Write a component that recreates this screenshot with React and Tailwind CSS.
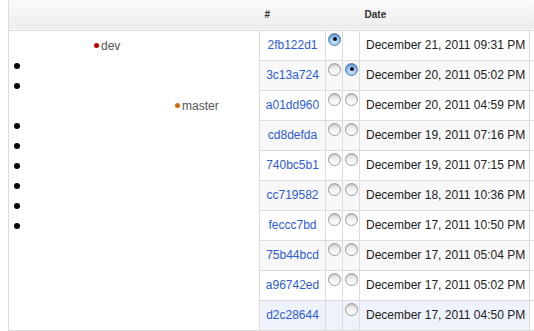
import React from 'react'

const commits = [
  { hash: '2fb122d1', date: 'December 21, 2011 09:31 PM', a: 'checked', b: null },
  { hash: '3c13a724', date: 'December 20, 2011 05:02 PM', a: 'off', b: 'checked' },
  { hash: 'a01dd960', date: 'December 20, 2011 04:59 PM', a: 'off', b: 'off' },
  { hash: 'cd8defda', date: 'December 19, 2011 07:16 PM', a: 'off', b: 'off' },
  { hash: '740bc5b1', date: 'December 19, 2011 07:15 PM', a: 'off', b: 'off' },
  { hash: 'cc719582', date: 'December 18, 2011 10:36 PM', a: 'off', b: 'off' },
  { hash: 'feccc7bd', date: 'December 17, 2011 10:50 PM', a: 'off', b: 'off' },
  { hash: '75b44bcd', date: 'December 17, 2011 05:04 PM', a: 'off', b: 'off' },
  { hash: 'a96742ed', date: 'December 17, 2011 05:02 PM', a: 'off', b: 'off' },
  { hash: 'd2c28644', date: 'December 17, 2011 04:50 PM', a: null, b: 'off' },
]

// graph nodes, one per 20px line
const nodes = [
  { ml: 'ml-[85px]', dot: 'bg-[#c00000] w-[5px] h-[5px]', label: 'dev' },
  { ml: 'ml-[5px]', dot: 'bg-black w-[6px] h-[6px]' },
  { ml: 'ml-[5px]', dot: 'bg-black w-[6px] h-[6px]' },
  { ml: 'ml-[166px]', dot: 'bg-[#d06a10] w-[5px] h-[5px]', label: 'master' },
  { ml: 'ml-[5px]', dot: 'bg-black w-[6px] h-[6px]' },
  { ml: 'ml-[5px]', dot: 'bg-black w-[6px] h-[6px]' },
  { ml: 'ml-[5px]', dot: 'bg-black w-[6px] h-[6px]' },
  { ml: 'ml-[5px]', dot: 'bg-black w-[6px] h-[6px]' },
  { ml: 'ml-[5px]', dot: 'bg-black w-[6px] h-[6px]' },
  { ml: 'ml-[5px]', dot: 'bg-black w-[6px] h-[6px]' },
]

function Radio({ state }) {
  if (!state) return null
  if (state === 'checked') {
    return (
      <div className="mt-[2px] ml-[2px] w-[13px] h-[13px] rounded-full border border-[#5b7fb8] bg-[radial-gradient(circle_at_50%_70%,#cfe6ff_0%,#8fbdf2_55%,#5f97dc_100%)] flex items-center justify-center shadow-[inset_0_1px_1px_rgba(0,0,0,0.25)]">
        <div className="w-[4px] h-[4px] rounded-full bg-[#111]" />
      </div>
    )
  }
  return (
    <div className="mt-[2px] ml-[2px] w-[13px] h-[13px] rounded-full border border-[#9d9d9d] bg-gradient-to-b from-[#d9d9d9] via-[#f2f2f2] to-white shadow-[inset_0_1px_1px_rgba(0,0,0,0.15)]" />
  )
}

export default function App() {
  return (
    <div className="w-[534px] h-[331px] overflow-hidden bg-white pl-2 font-['Liberation_Sans',Arial,sans-serif] text-[12px] text-[#222]">
      <table className="table-fixed border-collapse w-[546px]">
        <colgroup>
          <col className="w-[251px]" />
          <col className="w-[66px]" />
          <col className="w-[17px]" />
          <col className="w-[17px]" />
          <col className="w-[170px]" />
          <col className="w-[25px]" />
        </colgroup>
        <thead>
          <tr className="h-[30px] bg-gradient-to-b from-[#fbfbfb] to-[#ececec] border-b border-[#dcdcdc]">
            <th className="border-l border-[#dcdcdc]" />
            <th colSpan={3} className="text-left pl-[5px] text-[10px] font-bold text-[#333]">#</th>
            <th className="text-left pl-[5px] text-[10px] font-bold text-[#333]">Date</th>
            <th />
          </tr>
        </thead>
        <tbody>
          {commits.map((c, i) => {
            const bg = i === 9 ? 'bg-[#eef3fb]' : i % 2 === 1 ? 'bg-[#f8f8f8]' : 'bg-white'
            return (
              <tr key={c.hash} className="h-[30px]">
                {i === 0 && (
                  <td rowSpan={10} className="align-top p-0 bg-white border border-[#dcdcdc]">
                    <div className="flex flex-col pt-[5px] h-[299px]">
                      {nodes.map((n, k) => (
                        <div key={k} className={`h-[20px] flex items-center gap-[2px] ${n.ml}`}>
                          <span className={`rounded-full ${n.dot}`} />
                          {n.label && <span className="text-[#555] leading-none">{n.label}</span>}
                        </div>
                      ))}
                    </div>
                  </td>
                )}
                <td className={`border border-[#dcdcdc] text-center p-0 ${bg}`}>
                  <a href="#" className="text-[#2d5bd6]">{c.hash}</a>
                </td>
                <td className={`border border-[#dcdcdc] align-top p-0 ${bg}`}><Radio state={c.a} /></td>
                <td className={`border border-[#dcdcdc] align-top p-0 ${bg}`}><Radio state={c.b} /></td>
                <td className={`border border-[#dcdcdc] pl-[6px] p-0 whitespace-nowrap ${bg}`}>{c.date}</td>
                <td className="border border-[#dcdcdc] bg-white" />
              </tr>
            )
          })}
        </tbody>
      </table>
    </div>
  )
}
